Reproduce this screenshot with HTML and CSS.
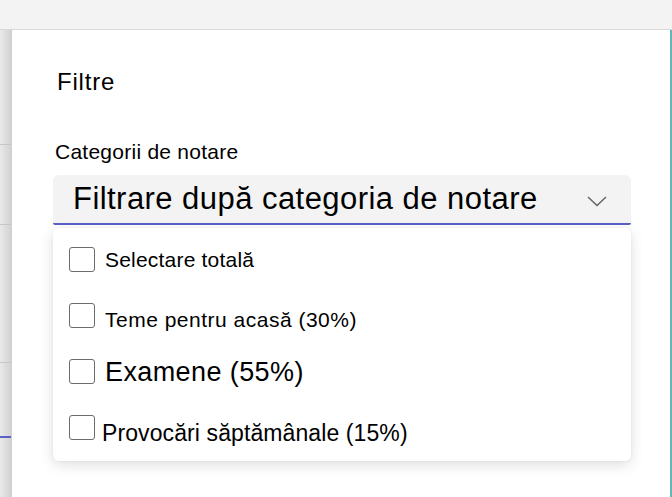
FILE: index.html
```html
<!DOCTYPE html>
<html lang="ro">
<head>
<meta charset="utf-8">
<title>Filtre</title>
<link rel="stylesheet" href="styles.css">
</head>
<body>
<div class="app">
  <div class="topbar"></div>
  <div class="main">
    <div class="rail">
      <div class="seg seg1"></div>
      <div class="seg seg2"></div>
      <div class="seg seg3"></div>
      <div class="seg seg4"></div>
    </div>
    <div class="panel">
      <h2 class="title">Filtre</h2>
      <div class="label">Categorii de notare</div>
      <div class="dropdown">
        <span class="dd-text">Filtrare după categoria de notare</span>
        <svg class="chev" width="20" height="11" viewBox="0 0 20 11"><path d="M1 1 L10 9.5 L19 1" fill="none" stroke="#616161" stroke-width="1.4"/></svg>
      </div>
      <div class="menu">
        <div class="item"><span class="box"></span><span class="txt t1">Selectare totală</span></div>
        <div class="item"><span class="box"></span><span class="txt t2">Teme pentru acasă (30%)</span></div>
        <div class="item"><span class="box"></span><span class="txt t3">Examene (55%)</span></div>
        <div class="item"><span class="box"></span><span class="txt t4">Provocări săptămânale (15%)</span></div>
      </div>
    </div>
  </div>
</div>
</body>
</html>
```
FILE: styles.css
```css
* { box-sizing: border-box; margin: 0; padding: 0; }
html, body { width: 672px; height: 497px; overflow: hidden; }
body { background: #f3f3f3; font-family: "Liberation Sans", Arial, sans-serif; color: #000; }
.app { display: grid; grid-template-rows: 30px 1fr; height: 497px; }
.topbar { background: #f3f3f3; border-bottom: 1px solid #d8d8d8; }
.main { display: flex; min-height: 0; }
.rail { width: 11px; display: flex; flex-direction: column; background: linear-gradient(to right, #e9e9e9, #d2d2d2); }
.seg { border-bottom: 1px solid #c6c6c6; }
.seg1 { height: 115px; }
.seg2 { height: 80px; }
.seg3 { height: 138px; }
.seg4 { height: 75px; border-bottom: 2px solid #5b5fc7; }
.panel { flex: 1; background: #fff; border-left: 1px solid #cfcfcf; border-right: 2px solid #62b6b7; padding: 38px 39px 0 41px; }
.title { font-size: 24px; font-weight: 400; line-height: 28px; letter-spacing: 0.8px; padding-left: 4px; }
.label { margin-top: 43px; font-size: 21px; line-height: 26px; letter-spacing: 0.25px; padding-left: 2px; }
.dropdown { margin-top: 10px; height: 50px; background: #f3f3f3; border-radius: 6px 6px 2px 2px; border-bottom: 2px solid #5b5fc7; display: flex; align-items: center; justify-content: space-between; padding: 0 24px 0 20px; }
.dd-text { font-size: 31px; line-height: 48px; letter-spacing: 0.45px; }
.chev { display: block; margin-top: 4px; }
.menu { margin-top: 3px; background: #fff; border-radius: 6px; box-shadow: 0 4px 14px rgba(0,0,0,0.13), 0 0 3px rgba(0,0,0,0.06); padding: 3px 16px 6px; display: flex; flex-direction: column; }
.item { height: 56px; display: flex; align-items: center; gap: 10px; }
.box { width: 26px; height: 25px; border: 1px solid #6b6b6b; border-radius: 3px; flex: none; }
.txt { line-height: 30px; }
.t1 { font-size: 21px; letter-spacing: 0.2px; margin: 1px 0 -1px; }
.t2 { font-size: 21px; letter-spacing: 0.5px; margin: 5px 0 -5px; }
.t3 { font-size: 27px; letter-spacing: 0.4px; margin: 1px 0 -1px; }
.t4 { font-size: 23px; letter-spacing: 0.1px; margin: 6px 0 -6px -3px; }
```
